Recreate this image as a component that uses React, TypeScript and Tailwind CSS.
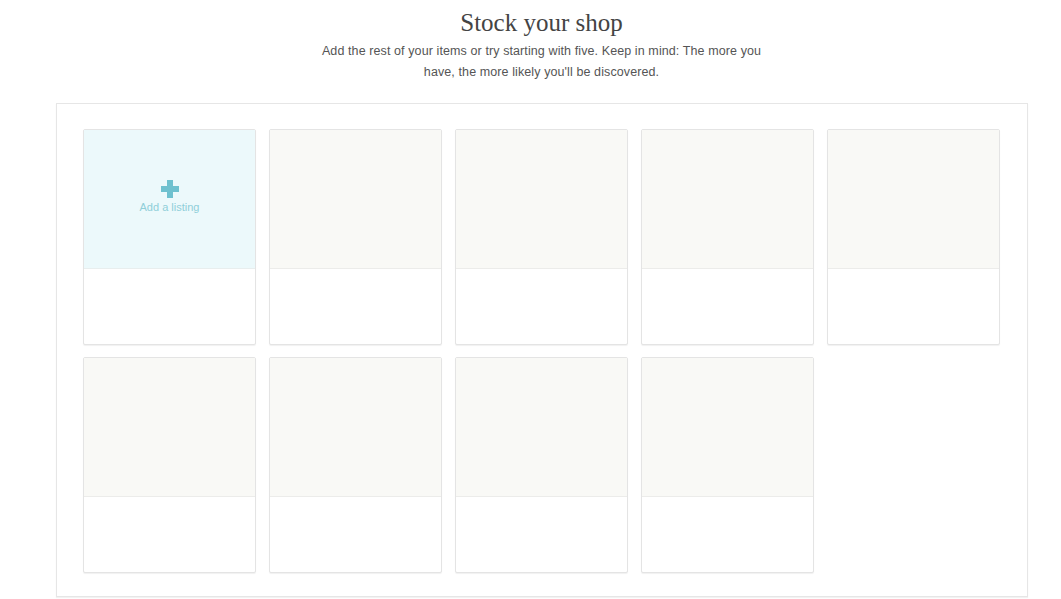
import React from 'react';

const Card = ({ add }: { add?: boolean }) => (
  <div className="w-[173px] h-[216px] flex flex-col border border-[#e4e4e4] rounded-[2px] bg-white shadow-[0_1px_1px_rgba(0,0,0,0.06)]">
    {add ? (
      <div className="h-[139px] bg-[#ecf9fb] border-b border-[#e8eeee] flex flex-col items-center justify-center pb-[2px]">
        <div className="relative w-[18px] h-[18px]">
          <div className="absolute left-[6px] top-0 w-[6px] h-[18px] bg-[#6fc1cf]" />
          <div className="absolute left-0 top-[6px] w-[18px] h-[6px] bg-[#6fc1cf]" />
        </div>
        <span className="mt-[1px] text-[11px] text-[#8fcfd9] font-['Liberation_Sans',sans-serif]">Add a listing</span>
      </div>
    ) : (
      <div className="h-[139px] bg-[#f9f9f6] border-b border-[#ececea]" />
    )}
    <div className="flex-1" />
  </div>
);

const App = () => {
  const cards = [true, false, false, false, false, false, false, false, false];

  return (
    <div className="w-[1061px] h-[599px] bg-white overflow-hidden">
      {/* Header */}
      <div className="pl-[22px] pt-[7px] text-center">
        <h1 className="text-[25px] leading-[32px] text-[#444] font-['Liberation_Serif',serif]">Stock your shop</h1>
        <p className="mt-[2px] mx-auto w-[460px] text-[12.5px] leading-[21px] text-[#555] tracking-[0.1px] font-['Liberation_Sans',sans-serif]">
          Add the rest of your items or try starting with five. Keep in mind: The more you have, the more likely you'll be discovered.
        </p>
      </div>

      {/* Listings panel */}
      <div className="ml-[56px] mt-[20px] w-[972px] h-[494px] border border-[#e6e6e6] shadow-[0_1px_1px_rgba(0,0,0,0.05)] pt-[25px] pl-[26px]">
        <div className="grid grid-cols-[repeat(5,173px)] gap-x-[13px] gap-y-[12px]">
          {cards.map((add, i) => (
            <Card key={i} add={add} />
          ))}
        </div>
      </div>
    </div>
  );
};

export default App;
